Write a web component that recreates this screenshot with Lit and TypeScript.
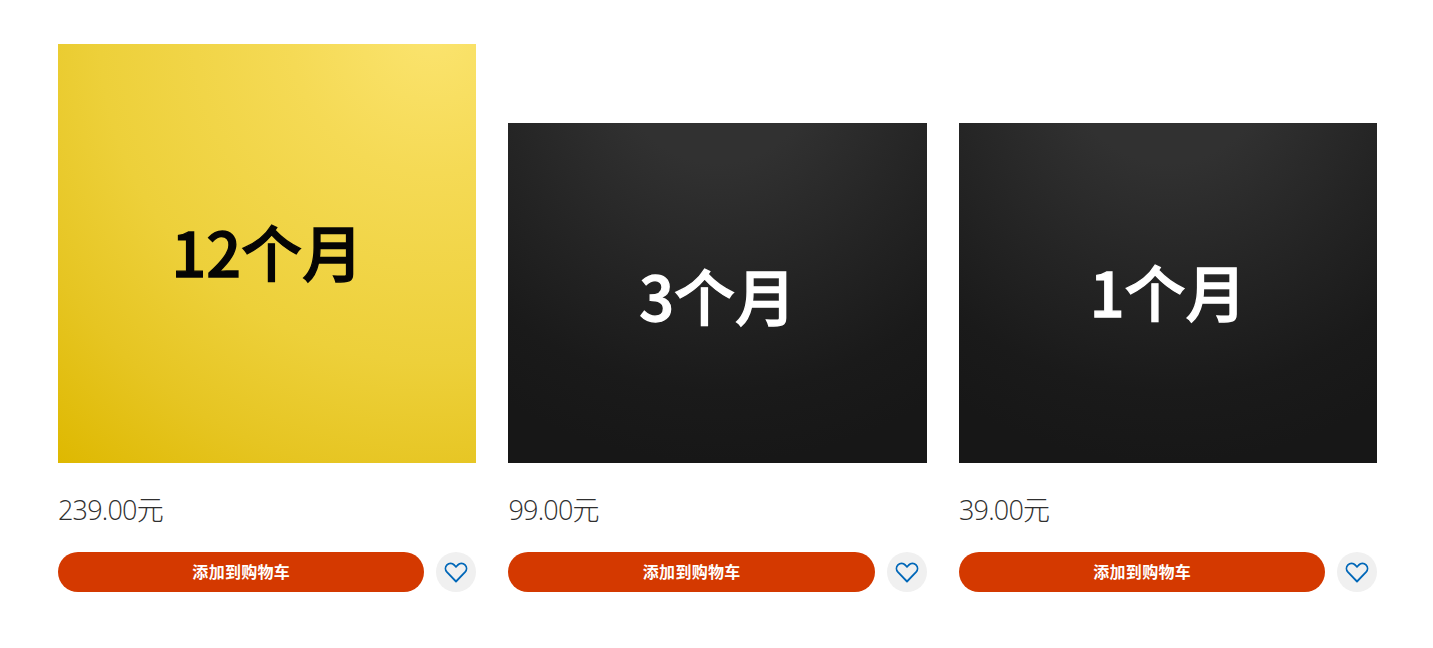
import { LitElement, html, css } from "lit";
import { customElement } from "lit/decorators.js";

const items = [
  { art: "gold", label: "12个月", price: "239.00元" },
  { art: "dark low", label: "3个月", price: "99.00元" },
  { art: "dark", label: "1个月", price: "39.00元" },
];

@customElement("app-root")
export class AppRoot extends LitElement {
  static styles = css`
    :host {
      display: block;
      min-height: 648px;
      background: #fff;
      font-family: "Open Sans", "Noto Sans CJK SC", sans-serif;
    }
    .grid {
      display: grid;
      grid-template-columns: repeat(3, 1fr);
      align-items: end;
      gap: 32px;
      padding: 44px 55.6px 0 58px;
    }
    .art {
      display: flex;
      align-items: center;
      justify-content: center;
      box-sizing: border-box;
      height: 340px;
      font-family: "Noto Sans CJK SC", sans-serif;
      font-weight: 500;
      -webkit-text-stroke: 1.3px currentColor;
      font-size: 61px;
      line-height: 1;
      letter-spacing: 0;
    }
    .gold {
      height: 419px;
      padding-bottom: 7px;
      color: #050505;
      background: radial-gradient(
        circle 575px at 375px -15px,
        #fbe46f 0%,
        #f5da55 25%,
        #edd03a 58%,
        #e6c522 78%,
        #deb800 100%
      );
    }
    .dark {
      color: #fff;
      padding-bottom: 5px;
      background: radial-gradient(
        circle 400px at 50% -60px,
        #313131 25%,
        #252525 54%,
        #1a1a1a 82%,
        #171717 100%
      );
    }
    .low { padding-bottom: 0; padding-top: 3px; }
    .price {
      margin-top: 29px;
      font-size: 27px;
      line-height: 36px;
      font-weight: 300;
      color: #2f2f2f;
      letter-spacing: -0.8px;
    }
    .actions {
      display: flex;
      align-items: center;
      gap: 12px;
      margin-top: 24px;
    }
    .add {
      flex: 1;
      height: 40px;
      border: 0;
      border-radius: 20px;
      background: #d43900;
      color: #fff;
      font: 700 16px "Noto Sans CJK SC", sans-serif;
      letter-spacing: 0.3px;
      padding: 0 0 2px;
    }
    .fav {
      flex: none;
      display: flex;
      align-items: center;
      justify-content: center;
      width: 40px;
      height: 40px;
      border: 0;
      border-radius: 50%;
      background: #f0f0f0;
      padding: 0;
    }
    .fav svg { display: block; width: 24px; height: 24px; }
  `;

  render() {
    return html`<div class="grid">
      ${items.map(
        (i) => html`<div class="card">
          <div class="art ${i.art}">${i.label}</div>
          <div class="price">${i.price}</div>
          <div class="actions">
            <button class="add">添加到购物车</button>
            <button class="fav" aria-label="收藏">
              <svg viewBox="0 0 24 24" fill="none" stroke="#0067b8" stroke-width="1.8" stroke-linejoin="round">
                <path d="M12 21.5 3 12.2C1 10 1 6.8 3 4.9 5 3 8.2 3 10.2 5L12 6.9 13.8 5C15.8 3 19 3 21 4.9 23 6.8 23 10 21 12.2Z" />
              </svg>
            </button>
          </div>
        </div>`
      )}
    </div>`;
  }
}
